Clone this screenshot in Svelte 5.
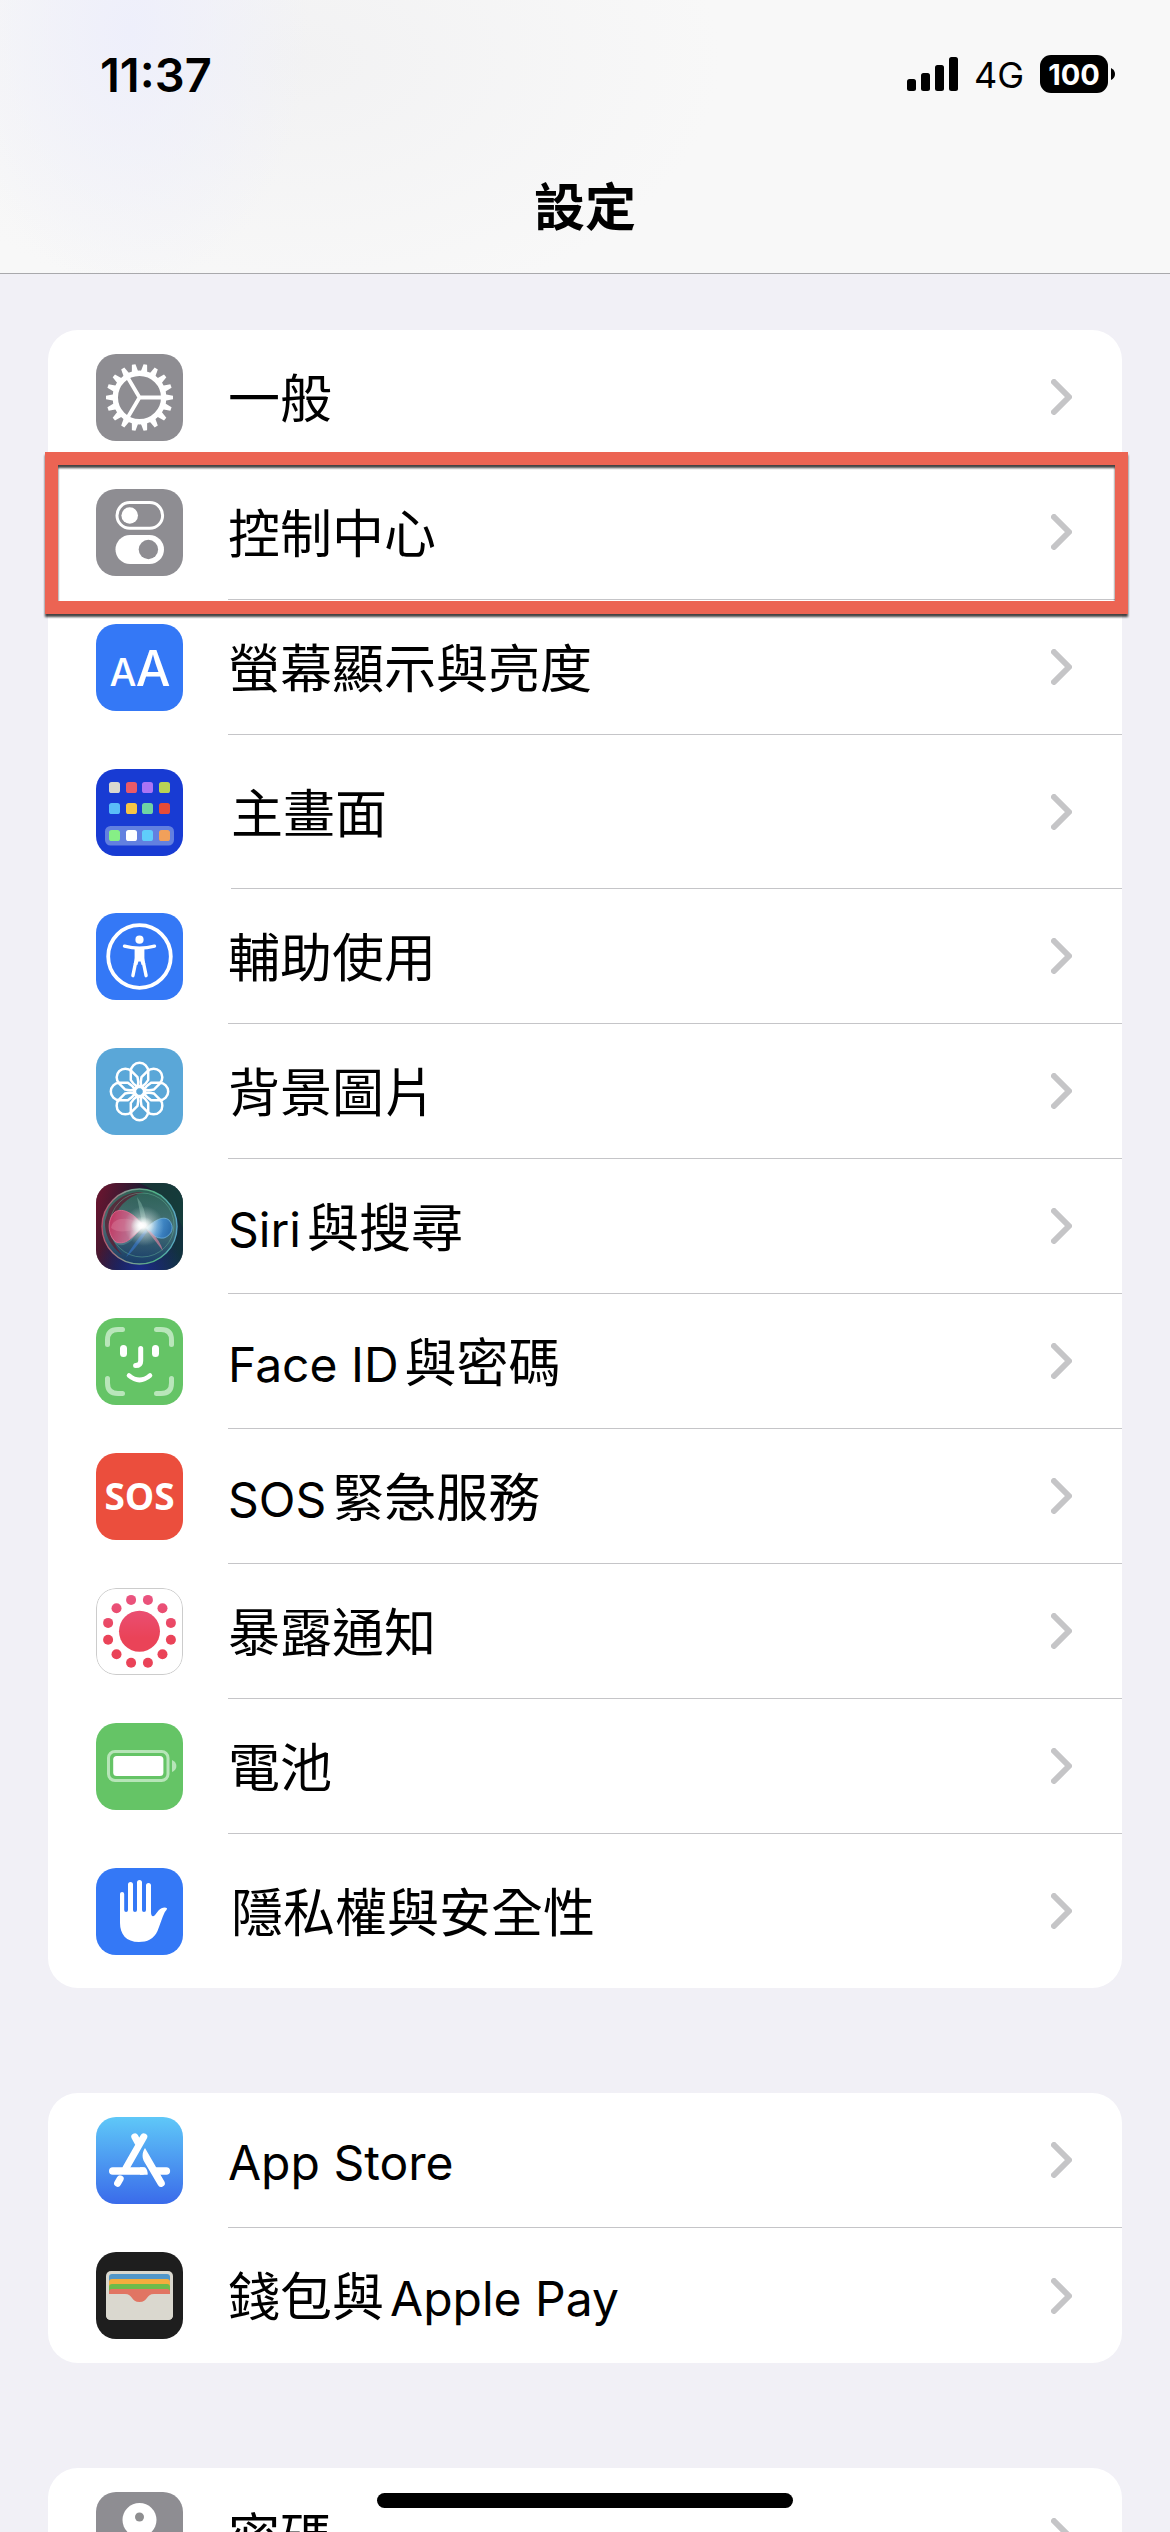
<script>
  const groups = [
    [
      { icon: 'gear', parts: ['一般'] },
      { icon: 'toggles', parts: ['控制中心'], marked: true },
      { icon: 'display', parts: ['螢幕顯示與亮度'] },
      { icon: 'home', parts: ['主畫面'], tall: true },
      { icon: 'access', parts: ['輔助使用'] },
      { icon: 'wallpaper', parts: ['背景圖片'] },
      { icon: 'siri', parts: ['Siri', '與搜尋'] },
      { icon: 'face', parts: ['Face ID', '與密碼'] },
      { icon: 'sos', parts: ['SOS', '緊急服務'] },
      { icon: 'exposure', parts: ['暴露通知'] },
      { icon: 'battery', parts: ['電池'] },
      { icon: 'hand', parts: ['隱私權與安全性'], tall: true }
    ],
    [
      { icon: 'store', parts: ['App Store'] },
      { icon: 'wallet', parts: ['錢包與', 'Apple Pay'] }
    ],
    [{ icon: 'key', parts: ['密碼'] }]
  ];

  const isLatin = (s) => /^[A-Za-z]/.test(s);

  const teeth = Array.from({ length: 18 }, (_, i) => i * 20);
  const petals = Array.from({ length: 8 }, (_, i) => i * 45);
  const dots = Array.from({ length: 12 }, (_, i) => i * 30 + 15);
  const appCols = [13, 30, 46, 63];
  const appRows = [
    { y: 13, fills: ['#d9d7cf', '#ea5a68', '#ab74f5', '#b9d355'] },
    { y: 34, fills: ['#5abdf8', '#f7c445', '#6fd5a4', '#e64b38'] },
    { y: 61, fills: ['#86ef86', '#ffffff', '#5fcdfb', '#f1a05a'] }
  ];
</script>

<div class="screen">
  <header>
    <div class="status">
      <time>11:37</time>
      <div class="indicators">
        <svg class="signal" viewBox="0 0 51 34" aria-hidden="true">
          <rect x="0" y="22" width="9" height="12" rx="2.5" />
          <rect x="14" y="16" width="9" height="18" rx="2.5" />
          <rect x="28" y="8" width="9" height="26" rx="2.5" />
          <rect x="42" y="0" width="9" height="34" rx="2.5" />
        </svg>
        <span class="network">4G</span>
        <span class="charge">
          <span class="level">100</span>
          <svg class="nub" viewBox="0 0 4 12" aria-hidden="true"><path d="M0 0 Q4 2 4 6 Q4 10 0 12Z" /></svg>
        </span>
      </div>
    </div>
    <h1>設定</h1>
  </header>

  <main>
    {#each groups as rows}
      <ul>
        {#each rows as row}
          <li class:tall={row.tall}>
            <a href="#{row.icon}">
              <svg class="icon {row.icon}" viewBox="0 0 87 87" aria-hidden="true">
                {#if row.icon === 'gear'}
                  <g fill="#fff">
                    {#each teeth as a}
                      <path d="M40.2 18 L41.7 10 H45.3 L46.8 18Z" transform="rotate({a + 90} 43.5 43.5)" />
                    {/each}
                  </g>
                  <circle cx="43.5" cy="43.5" r="24.2" fill="none" stroke="#fff" stroke-width="5.4" />
                  <path d="M43.5 43.5 H66 M43.5 43.5 L32 24 M43.5 43.5 L32 63" stroke="#fff" stroke-width="3.8" fill="none" />
                {:else if row.icon === 'toggles'}
                  <rect x="21" y="13.6" width="45.6" height="25.6" rx="12.8" fill="none" stroke="#fff" stroke-width="3" />
                  <circle cx="33.7" cy="26.5" r="8.3" fill="#fff" />
                  <rect x="19.5" y="46" width="48.5" height="29" rx="14.5" fill="#fff" />
                  <circle cx="52.4" cy="60.5" r="9.7" fill="#8e8d92" />
                {:else if row.icon === 'display'}
                  <g fill="#fff" text-anchor="middle" class="glyph">
                    <text x="27" y="62" font-size="38">A</text>
                    <text x="57" y="62" font-size="49">A</text>
                  </g>
                {:else if row.icon === 'home'}
                  <rect x="9" y="57" width="69" height="19.5" rx="5.5" fill="#6280e0" />
                  {#each appRows as r}
                    {#each r.fills as fill, i}
                      <rect x={appCols[i]} y={r.y} width="11" height="11" rx="2.6" {fill} />
                    {/each}
                  {/each}
                {:else if row.icon === 'access'}
                  <circle cx="43.5" cy="43.5" r="31.3" fill="none" stroke="#fff" stroke-width="3.8" />
                  <circle cx="43.5" cy="26.7" r="4.1" fill="#fff" />
                  <path d="M28.5 33.2 Q43.5 37 58.5 33.2 M39.5 50 L36.9 62.7 M47.5 50 L50.1 62.7" stroke="#fff" stroke-width="3.4" stroke-linecap="round" fill="none" />
                  <path d="M38.6 35 H48.4 V45 L49.2 51 L45.6 52 L44.6 48.6 H42.4 L41.4 52 L37.8 51 L38.6 45Z" fill="#fff" />
                {:else if row.icon === 'wallpaper'}
                  <g fill="none" stroke="#fff" stroke-width="2.5">
                    {#each petals as a}
                      <path d="M34.8 23.5 a8.7 8.7 0 0 1 17.4 0 V32 Q50 36 45.5 39 H41.5 Q37 36 34.8 32Z" transform="rotate({a} 43.5 43.5)" />
                    {/each}
                    <circle cx="43.5" cy="43.5" r="5.6" stroke-width="2.4" />
                  </g>
                {:else if row.icon === 'siri'}
                  <defs>
                    <linearGradient id="sBase" x1="0" y1="0.3" x2="1" y2="0.6">
                      <stop offset="0" stop-color="#64152f" /><stop offset="0.45" stop-color="#1d1c33" /><stop offset="1" stop-color="#12323f" />
                    </linearGradient>
                    <radialGradient id="sBlue" cx="0.5" cy="1" r="0.5">
                      <stop offset="0" stop-color="#1b2a8a" /><stop offset="1" stop-color="#1b2a8a" stop-opacity="0" />
                    </radialGradient>
                    <linearGradient id="sOrb" x1="0.55" y1="0" x2="0.5" y2="1">
                      <stop offset="0" stop-color="#2f6d5b" /><stop offset="0.5" stop-color="#4d7d80" /><stop offset="1" stop-color="#174066" />
                    </linearGradient>
                    <linearGradient id="sRing" x1="0" y1="0.5" x2="1" y2="0.5">
                      <stop offset="0" stop-color="#b7526a" /><stop offset="0.35" stop-color="#7f9d94" /><stop offset="0.7" stop-color="#4fb184" /><stop offset="1" stop-color="#5aa7c9" />
                    </linearGradient>
                    <linearGradient id="sPink" x1="0" y1="0" x2="1" y2="0.2">
                      <stop offset="0" stop-color="#c92f5d" /><stop offset="0.7" stop-color="#c46f91" /><stop offset="1" stop-color="#fff" />
                    </linearGradient>
                    <linearGradient id="sSky" x1="0" y1="0" x2="1" y2="0.2">
                      <stop offset="0" stop-color="#d9f6ff" /><stop offset="0.5" stop-color="#4a98e0" /><stop offset="1" stop-color="#2a6fb6" />
                    </linearGradient>
                    <radialGradient id="sGlow">
                      <stop offset="0" stop-color="#fff" /><stop offset="0.3" stop-color="#fff" stop-opacity="0.9" /><stop offset="1" stop-color="#cfe9e4" stop-opacity="0" />
                    </radialGradient>
                  </defs>
                  <rect width="87" height="87" fill="url(#sBase)" />
                  <path d="M43 0 H87 V45 Q70 10 43 0Z" fill="#15463a" opacity="0.6" />
                  <rect width="87" height="87" fill="url(#sBlue)" />
                  <circle cx="43.5" cy="43.5" r="37.5" fill="url(#sOrb)" fill-opacity="0.85" stroke="url(#sRing)" stroke-width="1.4" />
                  <path d="M13 26 Q26 8 48 9 Q22 16 16 42 Q14 58 26 72 Q8 58 9 38Z" fill="#5e1b30" opacity="0.75" />
                  <circle cx="46" cy="42" r="32" fill="none" stroke="#69b79c" stroke-opacity="0.45" />
                  <path d="M46 43 Q34 25 20 29 Q10 36 15 54 Q22 68 35 58Z" fill="#70a5aa" opacity="0.4" />
                  <path d="M48 43 C38 31 27 24 19 29 C11 36 11 52 20 59 C31 63 38 52 48 43Z" fill="url(#sPink)" stroke="#ef6f94" stroke-width="0.8" opacity="0.93" />
                  <path d="M48 43 C34 32 16 34 15 45 C24 52 38 47 48 43Z" fill="#e894ae" opacity="0.3" />
                  <path d="M50 45 C58 38 67 32 73 37 C79 44 76 52 68 55 C60 56 55 51 50 45Z" fill="url(#sSky)" stroke="#79bff0" stroke-width="0.8" opacity="0.85" />
                  <path d="M50 46 Q38 60 30 74 Q38 68 51 49Z" fill="#3978c9" opacity="0.65" />
                  <path d="M50 46 L67 68 Q64 57 54 48Z" fill="#cb7f99" opacity="0.75" />
                  <path d="M46 40 L41 14 Q50 25 50 40Z" fill="#a7d7c7" opacity="0.35" />
                  <circle cx="48" cy="43" r="20" fill="url(#sGlow)" opacity="0.6" />
                  <ellipse cx="46.5" cy="42.5" rx="12" ry="9" fill="url(#sGlow)" />
                {:else if row.icon === 'face'}
                  <path d="M11.5 26.5 V22 Q11.5 11.5 22 11.5 H26.5 M60.5 11.5 H65 Q75.5 11.5 75.5 22 V26.5 M75.5 60.5 V65 Q75.5 75.5 65 75.5 H60.5 M26.5 75.5 H22 Q11.5 75.5 11.5 65 V60.5" fill="none" stroke="#b9e6ba" stroke-width="5" stroke-linecap="round" />
                  <path d="M27.5 30.5 V35.5 M59.5 30.5 V35.5" stroke="#fff" stroke-width="7" stroke-linecap="round" />
                  <path d="M44.7 30.5 V43 Q44.7 47.6 39.6 47.6" fill="none" stroke="#fff" stroke-width="5" stroke-linecap="round" />
                  <path d="M33 57.5 Q43.5 66.5 54 57.5" fill="none" stroke="#fff" stroke-width="4.6" stroke-linecap="round" />
                {:else if row.icon === 'sos'}
                  <text class="sos-text" x="43.5" y="57" text-anchor="middle" font-size="37" fill="#fff">SOS</text>
                {:else if row.icon === 'exposure'}
                  <defs>
                    <linearGradient id="rose" gradientUnits="userSpaceOnUse" x1="0" y1="5" x2="0" y2="50">
                      <stop offset="0" stop-color="#ea5583" /><stop offset="1" stop-color="#ea4358" />
                    </linearGradient>
                  </defs>
                  <rect x="0.5" y="0.5" width="86" height="86" rx="19.5" fill="#fff" stroke="#ccc" />
                  <circle cx="43.5" cy="43.3" r="20.5" fill="url(#rose)" />
                  {#each dots as a}
                    <circle
                      cx={43.5 + 32.5 * Math.sin((a * Math.PI) / 180)}
                      cy={43.3 - 32.5 * Math.cos((a * Math.PI) / 180)}
                      r="5"
                      fill="url(#rose)"
                    />
                  {/each}
                {:else if row.icon === 'battery'}
                  <rect x="12.5" y="28.5" width="59.5" height="29" rx="6.5" fill="none" stroke="#b7e5b8" stroke-width="3" />
                  <rect x="17.2" y="33" width="50.2" height="20" rx="3.5" fill="#fff" />
                  <path d="M76 37 Q80.4 39 80.4 43 Q80.4 47 76 49Z" fill="#b7e5b8" />
                {:else if row.icon === 'hand'}
                  <path fill="#fff" d="M24 26 a2.1 2.1 0 0 1 4.2 0 V42 a1.9 1.9 0 0 0 3.8 0 V16.5 a2.5 2.5 0 0 1 5 0 V42 a2 2 0 0 0 4 0 V14.5 a2.5 2.5 0 0 1 5 0 V42 a2 2 0 0 0 4 0 V17.5 a2.5 2.5 0 0 1 5 0 V44 C55 48.5 57 49.5 59 47 L62.5 42.5 C65 39.8 69 38.5 71 40.2 C71.2 41.5 69.6 42.5 68.6 44.5 C66 50 64 57 61.5 63 C58 71 51 74 43 74 C30 74 24 66 24 55 Z" />
                {:else if row.icon === 'store'}
                  <g fill="none" stroke="#fff" stroke-width="7" stroke-linecap="round">
                    <path d="M47.8 19.8 L30 51 M38.8 19.8 L42.5 26.5" />
                    <path d="M16.8 54 H46" stroke-width="7.6" />
                    <path d="M60 54 H70.3" stroke-width="7.6" />
                    <path d="M21.6 66.3 L24.2 61.8" />
                  </g>
                  <path d="M44 50.2 H49 Q52 53 51.6 57.8 H44Z" fill="#fff" />
                  <path d="M49 31 C45.8 36 46 41 48.4 45 L61.8 67.8 A3.6 3.6 0 0 0 68.4 64.4Z" fill="#fff" />
                {:else if row.icon === 'wallet'}
                  <rect x="10" y="19" width="67" height="49" rx="5" fill="#dad8cf" />
                  <path d="M13 42 V25 Q13 22 16 22 H71 Q74 22 74 25 V42Z" fill="#5297c9" />
                  <path d="M13 42 V30 Q13 27 16 27 H71 Q74 27 74 30 V42Z" fill="#f3ad3d" />
                  <path d="M13 42 V35 Q13 32 16 32 H71 Q74 32 74 35 V42Z" fill="#6dbb4b" />
                  <path d="M13 52 V40 Q13 37 16 37 H71 Q74 37 74 40 V52Z" fill="#e17563" />
                  <path d="M10 42 H29 C37 42 35 50 43.5 50 C52 50 50 42 58 42 H77 V63 Q77 68 72 68 H15 Q10 68 10 63Z" fill="#dad8cf" />
                {:else}
                  <circle cx="43.5" cy="28" r="17" fill="#fff" />
                  <path d="M38 42 H49 V56 L45 60 L49 64 L45 68 L49 72 L43.5 78 L38 72Z" fill="#fff" />
                  <circle cx="43.5" cy="25" r="4.5" fill="#8e8e90" />
                {/if}
              </svg>
              <span class="body">
                <span class="label">
                  {#each row.parts as part}<span class:latin={isLatin(part)}>{part}</span>{/each}
                </span>
                <svg class="chevron" viewBox="0 0 21 36" aria-hidden="true">
                  <path d="M3 3 L18 18 L3 33" />
                </svg>
              </span>
            </a>
            {#if row.marked}<span class="marker"></span>{/if}
          </li>
        {/each}
      </ul>
    {/each}
  </main>
  <div class="home-bar"></div>
</div>

<style>
  :global(body) {
    background: #f1f0f6;
  }

  .screen {
    position: relative;
    display: flex;
    flex-direction: column;
    height: 100vh;
    overflow: hidden;
    background: #f1f0f6;
    color: #000;
    font-family: Inter, 'Noto Sans CJK TC', sans-serif;
  }

  header {
    flex: none;
    border-bottom: 1px solid #a9a9ac;
    background:
      radial-gradient(ellipse 180px 260px at 130px 30px, #eeeffb, #eeeffb00),
      radial-gradient(ellipse 420px 260px at 300px 60px, #f2f2f3, #f2f2f300),
      #f8f8f8;
  }

  .status {
    display: flex;
    align-items: center;
    justify-content: space-between;
    height: 148px;
    padding: 0 55px 0 100px;
  }

  time {
    font-size: 47px;
    font-weight: 600;
  }

  .indicators {
    display: flex;
    align-items: center;
    gap: 16px;
  }

  .signal {
    width: 51px;
    height: 34px;
  }

  .network {
    font-size: 36px;
    line-height: 48px;
    padding-top: 2px;
  }

  .charge {
    display: flex;
    align-items: center;
    gap: 3px;
  }

  .level {
    display: grid;
    place-items: center;
    width: 68px;
    height: 38px;
    border-radius: 11px;
    background: #000;
    color: #fff;
    font-size: 29px;
    font-weight: 700;
  }

  .nub {
    width: 4px;
    height: 12px;
  }

  h1 {
    height: 125px;
    margin: 0;
    font-size: 51px;
    font-weight: 700;
    line-height: 120px;
    text-align: center;
  }

  main {
    flex: 1;
    min-height: 0;
    display: flex;
    flex-direction: column;
    gap: 105px;
    padding: 56px 48px 0;
  }

  ul {
    flex: none;
    margin: 0;
    padding: 0;
    list-style: none;
    border-radius: 30px;
    background: #fff;
  }

  li {
    position: relative;
  }

  a {
    display: flex;
    align-items: center;
    gap: 45px;
    height: 135px;
    padding-left: 48px;
    color: inherit;
    text-decoration: none;
  }

  .tall a {
    gap: 48px;
    height: 154px;
  }

  .icon {
    flex: none;
    width: 87px;
    height: 87px;
    border-radius: 20px;
    overflow: hidden;
    background: #8e8d92;
  }

  .display,
  .access,
  .hand {
    background: #3478f6;
  }

  .home {
    background: #183bd3;
  }

  .wallpaper {
    background: #5aa7d8;
  }

  .face,
  .battery {
    background: #65c466;
  }

  .sos {
    background: #eb4e3d;
  }

  .exposure {
    background: #fff;
  }

  .store {
    background: linear-gradient(#5fc8f8, #3a6bea);
  }

  .wallet {
    background: #1e1e1e;
  }

  .glyph {
    font-family: Inter, sans-serif;
    font-weight: 500;
  }

  .sos-text {
    font-family: 'Open Sans', sans-serif;
    font-weight: 700;
  }

  .body {
    flex: 1;
    display: flex;
    align-items: center;
    justify-content: space-between;
    box-sizing: border-box;
    height: 100%;
    padding-right: 50px;
    border-bottom: 1px solid #c5c5c8;
  }

  li:last-child .body {
    border-bottom: 0;
  }

  .label {
    display: flex;
    align-items: baseline;
    gap: 6px;
    padding-top: 6px;
    font-size: 52px;
    line-height: 72px;
    white-space: nowrap;
  }

  .latin {
    font-size: 48px;
  }

  .chevron {
    width: 21px;
    height: 36px;
    fill: none;
    stroke: #c5c5c7;
    stroke-width: 6;
    stroke-linecap: round;
    stroke-linejoin: round;
  }

  /* Highlight frame laid over the row and its neighbours' edges */
  .marker {
    position: absolute;
    z-index: 1;
    inset: -13px -6px -14px -3px;
    border: 13px solid #ec6453;
    filter: drop-shadow(0 3px 1px #000b);
    pointer-events: none;
  }

  .home-bar {
    position: absolute;
    bottom: 24px;
    left: 50%;
    width: 416px;
    height: 15px;
    margin-left: -208px;
    border-radius: 8px;
    background: #000;
  }
</style>
